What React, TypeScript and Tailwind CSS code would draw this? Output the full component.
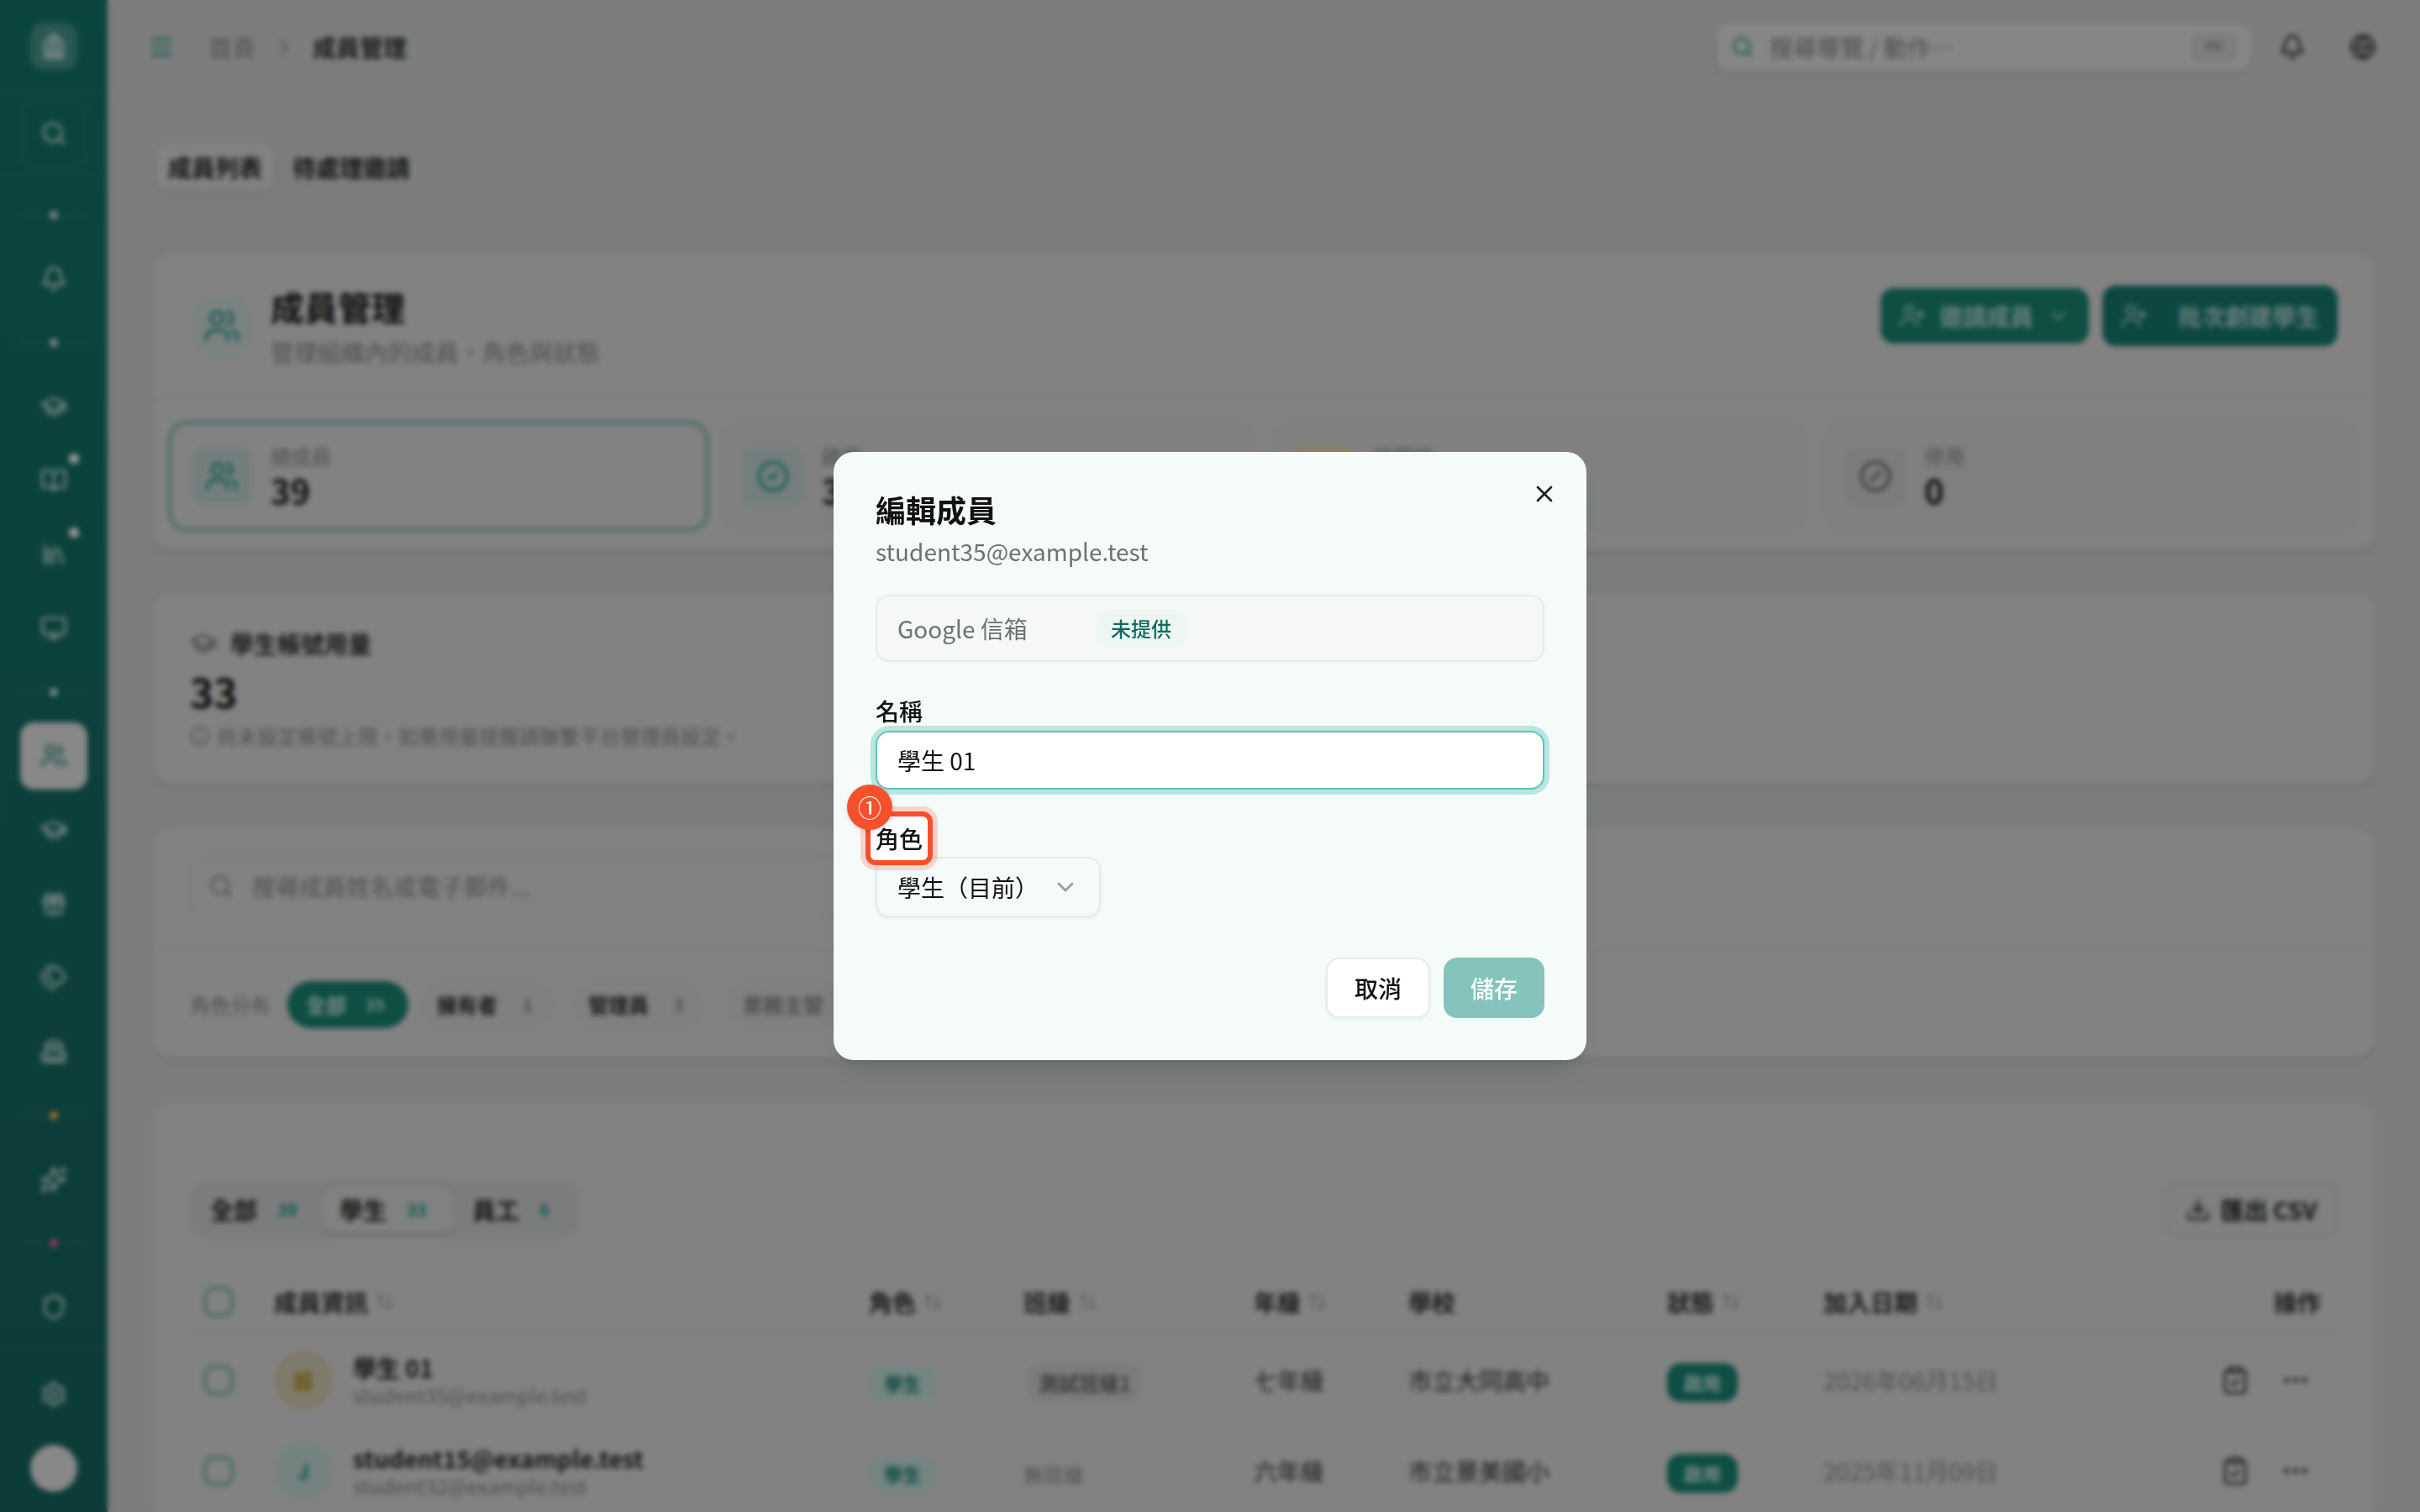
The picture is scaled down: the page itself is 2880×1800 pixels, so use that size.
import {
  ArrowUpDown,
  Backpack,
  Bell,
  BookOpen,
  ChevronDown,
  ChevronRight,
  CircleCheck,
  CircleSlash,
  Clock,
  ClipboardCheck,
  Download,
  Ellipsis,
  Gift,
  Globe,
  GraduationCap,
  Info,
  Library,
  Menu,
  Monitor,
  School,
  Search,
  Settings,
  Shield,
  Sparkles,
  Tags,
  UserPlus,
  Users,
  X,
} from "lucide-react"

const rowGrid = "grid grid-cols-[50px_354px_92px_137px_92px_154px_93px_1fr] items-center"

function SideSep({ dot = "bg-white/70" }: { dot?: string }) {
  return (
    <div className="flex h-7 w-[40px] items-center justify-center gap-1">
      <span className="h-px flex-1 bg-white/10" />
      <span className={`size-[5px] rounded-full ${dot}`} />
      <span className="h-px flex-1 bg-white/10" />
    </div>
  )
}

function SideItem({ children, badge, active }: { children: React.ReactNode; badge?: boolean; active?: boolean }) {
  return (
    <div
      className={`relative flex size-10 items-center justify-center rounded-lg ${
        active ? "bg-[#d0d1d0] text-[#167868] shadow-sm" : "text-white/75"
      }`}
    >
      {children}
      {badge && <span className="absolute top-[4px] right-[5px] size-[6px] rounded-full bg-white/90" />}
    </div>
  )
}

function Sidebar() {
  return (
    <aside className="flex h-full w-16 shrink-0 flex-col items-center bg-gradient-to-b from-[#126a61] to-[#135c57]">
      <div className="flex h-14 w-full items-center justify-center border-b border-white/5">
        <div className="flex size-7 items-center justify-center rounded-lg bg-white/20 text-white/80">
          <Backpack size={16} />
        </div>
      </div>
      <div className="flex h-12 w-full items-center justify-center border-b border-white/5">
        <div className="flex size-10 items-center justify-center rounded-lg border border-white/5 text-white/75">
          <Search size={16} />
        </div>
      </div>
      <nav className="flex flex-1 flex-col items-center gap-1 pt-[10px]">
        <SideSep />
        <SideItem><Bell size={16} /></SideItem>
        <SideSep />
        <SideItem><GraduationCap size={16} /></SideItem>
        <SideItem badge><BookOpen size={16} /></SideItem>
        <SideItem badge><Library size={16} /></SideItem>
        <SideItem><Monitor size={16} /></SideItem>
        <SideSep />
        <SideItem active><Users size={16} /></SideItem>
        <SideItem><GraduationCap size={16} /></SideItem>
        <SideItem><Gift size={16} /></SideItem>
        <SideItem><Tags size={16} /></SideItem>
        <SideItem><School size={16} /></SideItem>
        <SideSep dot="bg-[#f0a93b]" />
        <SideItem><Sparkles size={16} /></SideItem>
        <SideSep dot="bg-[#e0559b]" />
        <SideItem><Shield size={16} /></SideItem>
      </nav>
      <div className="flex w-full flex-col items-center gap-[10px] border-t border-white/5 pt-[7px] pb-3">
        <SideItem><Settings size={16} /></SideItem>
        <div className="size-7 rounded-full bg-[#d0d1d0]" />
      </div>
    </aside>
  )
}

function TopBar() {
  return (
    <header className="flex h-14 shrink-0 items-center border-b border-black/5 pt-[1px] pr-[26px] pl-6">
      <Menu size={16} className="text-[#1a8a7d]" />
      <span className="ml-[20px] text-sm text-[#7a7c7b]">首頁</span>
      <ChevronRight size={14} className="mr-[10px] ml-[10px] text-[#7a7c7b]" />
      <span className="text-sm font-semibold text-[#2b2b2b]">成員管理</span>
      <div className="ml-auto flex h-[29px] w-[319px] items-center rounded-lg border border-black/5 bg-[#cdcfce] px-2 shadow-sm">
        <Search size={14} className="text-[#1a8a7d]" />
        <span className="ml-[9px] text-sm text-[#7a7c7b]">搜尋導覽 / 動作⋯</span>
        <kbd className="ml-auto rounded bg-[#c0c2c1] px-2 py-0.5 text-[9px] text-[#7a7c7b]">⌘K</kbd>
      </div>
      <Bell size={16} className="ml-[16px] text-[#222]" />
      <Globe size={16} className="ml-[26px] text-[#222]" />
    </header>
  )
}

function StatCard({
  icon,
  label,
  value,
  tint,
  active,
}: {
  icon: React.ReactNode
  label: string
  value: string
  tint: string
  active?: boolean
}) {
  return (
    <div
      className={`flex h-[66px] items-center gap-[11px] rounded-xl border-2 px-[12px] ${
        active ? "-mr-[2px] border-[#6fa59c]" : "border-transparent bg-[#c3c5c4]"
      }`}
    >
      <div className={`flex size-9 items-center justify-center rounded-lg ${tint}`}>{icon}</div>
      <div className="flex flex-col">
        <span className="text-xs leading-4 text-[#7a7c7b]">{label}</span>
        <span className="text-xl leading-6 font-semibold text-[#1a1a1a]">{value}</span>
      </div>
    </div>
  )
}

function RolePill({
  label,
  count,
  active,
  muted,
  className = "",
}: {
  label: string
  count: string
  active?: boolean
  muted?: boolean
  className?: string
}) {
  return (
    <div
      className={`flex h-7 items-center rounded-full text-xs font-semibold whitespace-nowrap ${className} ${
        active ? "bg-[#167868] text-white/70" : "bg-[#c3c5c4]"
      } ${muted ? "text-[#7a7c7b]" : active ? "" : "text-[#2b2b2b]"}`}
    >
      <span>{label}</span>
      <span className={`text-[10px] ${active ? "text-white/60" : "text-[#7a7c7b]"}`}>{count}</span>
    </div>
  )
}

function HeaderCell({ label, sort = true }: { label: string; sort?: boolean }) {
  return (
    <div className="flex items-center gap-1 text-sm font-semibold text-[#2b2b2b]">
      {label}
      {sort && <ArrowUpDown size={12} className="text-[#8f9190]" />}
    </div>
  )
}

function MemberRow({
  initial,
  avatar,
  name,
  email,
  classCell,
  grade,
  school,
  date,
}: {
  initial: string
  avatar: string
  name: string
  email: string
  classCell: React.ReactNode
  grade: string
  school: string
  date: string
}) {
  return (
    <div className={`${rowGrid} h-[54px] border-b border-black/5 pr-[10px]`}>
      <div className="pl-2">
        <div className="size-[18px] rounded-[6px] border-2 border-[#6fa59c]" />
      </div>
      <div className="flex items-center gap-[12px]">
        <div className={`flex size-[35px] items-center justify-center rounded-full text-xs font-semibold ${avatar}`}>
          {initial}
        </div>
        <div className="flex flex-col">
          <span className="text-sm leading-[18px] font-semibold text-[#222]">{name}</span>
          <span className="text-xs leading-[15px] text-[#7a7c7b]">{email}</span>
        </div>
      </div>
      <div>
        <span className="inline-flex h-[21px] w-[40px] items-center justify-center rounded-lg bg-[#b3cdc8] text-[11px] font-semibold text-[#167868]">
          學生
        </span>
      </div>
      <div>{classCell}</div>
      <div className="text-sm text-[#2b2b2b]">{grade}</div>
      <div className="text-sm text-[#2b2b2b]">{school}</div>
      <div>
        <span className="inline-flex h-[23px] w-[42px] items-center justify-center rounded-lg bg-[#167868] text-[11px] font-semibold text-white/70">
          啟用
        </span>
      </div>
      <div className="flex items-center justify-between pr-[6px]">
        <span className="text-sm text-[#7a7c7b]">{date}</span>
        <div className="flex items-center gap-[18px] text-[#333]">
          <ClipboardCheck size={18} />
          <Ellipsis size={18} />
        </div>
      </div>
    </div>
  )
}

function Page() {
  return (
    <main className="flex min-w-0 flex-1 flex-col">
      <TopBar />
      <div className="flex flex-col px-[26px] pt-[29px]">
        <div className="flex h-[29px] items-center gap-[5px] pl-[3px]">
          <span className="flex h-[29px] w-[70px] items-center justify-center rounded-lg bg-[#c8c8c8] text-sm font-semibold text-[#222] shadow-sm">
            成員列表
          </span>
          <span className="px-[6px] text-sm font-semibold text-[#222]">待處理邀請</span>
        </div>

        <section className="mt-9 rounded-xl border border-black/5 bg-[#c8c8c8] shadow-sm">
          <div className="flex h-[87px] items-center border-b border-black/5 pr-[22px] pl-[23px]">
            <div className="flex size-9 items-center justify-center rounded-xl bg-[#bdc9c6] text-[#1a8a7d]">
              <Users size={22} />
            </div>
            <div className="ml-[11px] flex flex-col">
              <h1 className="text-xl leading-7 font-bold text-[#151515]">成員管理</h1>
              <p className="mt-[3px] text-sm leading-5 text-[#7a7c7b]">管理組織內的成員、角色與狀態</p>
            </div>
            <div className="mt-[19px] ml-auto flex items-center gap-2 self-start">
              <button className="flex h-[33px] w-[124px] items-center justify-center gap-2 rounded-lg bg-[#167868] text-sm font-semibold text-white/60">
                <UserPlus size={16} />
                邀請成員
                <ChevronDown size={14} />
              </button>
              <button className="flex h-9 w-[140px] items-center justify-center gap-[18px] rounded-lg bg-[#136e66] text-sm font-semibold text-white/60">
                <UserPlus size={16} />
                批次創建學生
              </button>
            </div>
          </div>
          <div className="grid h-[89px] grid-cols-4 items-center gap-2 px-[9px] pt-[2px]">
            <StatCard active label="總成員" value="39" tint="bg-[#b3c4c0]" icon={<Users size={20} className="text-[#1a8a7d]" />} />
            <StatCard label="啟用" value="33" tint="bg-[#b3c4c0]" icon={<CircleCheck size={20} className="text-[#1a8a7d]" />} />
            <StatCard label="待審核" value="6" tint="bg-[#d8c49a]" icon={<Clock size={20} className="text-[#c98a1e]" />} />
            <StatCard label="停用" value="0" tint="bg-[#bdbfbe]" icon={<CircleSlash size={20} className="text-[#555]" />} />
          </div>
        </section>

        <section className="mt-[24px] flex h-[115px] flex-col rounded-xl border border-black/5 bg-[#c8c8c8] px-[22px] pt-[20px] shadow-sm">
          <div className="flex items-center gap-[8px] text-sm font-semibold text-[#2b2b2b]">
            <GraduationCap size={16} className="text-[#666]" />
            學生帳號用量
          </div>
          <div className="mt-[2px] text-2xl leading-8 font-bold text-[#151515]">33</div>
          <div className="mt-[3px] flex items-center gap-[4px] text-xs text-[#7a7c7b]">
            <Info size={12} />
            尚未設定帳號上限，如需用量提醒請聯繫平台管理員設定。
          </div>
        </section>

        <section className="mt-[25px] rounded-xl border border-black/5 bg-[#c8c8c8] shadow-sm">
          <div className="flex h-[73px] items-start border-b border-black/5 px-[22px] pt-[16px]">
            <div className="flex h-[37px] w-[700px] items-center rounded-lg border border-black/5 px-[10px]">
              <Search size={15} className="text-[#7a7c7b]" />
              <input
                readOnly
                placeholder="搜尋成員姓名或電子郵件..."
                className="ml-[11px] flex-1 bg-transparent text-sm placeholder:text-[#7a7c7b]"
              />
            </div>
          </div>
          <div className="flex h-[63px] items-center gap-[9px] px-[22px] pt-[1px]">
            <span className="mr-[1px] text-xs text-[#7a7c7b]">角色分布</span>
            <RolePill active label="全部" count="39" className="w-[72px] gap-[11px] pl-[11px]" />
            <RolePill label="擁有者" count="1" className="-ml-[2px] w-[80px] gap-[15px] pl-[10px]" />
            <RolePill label="管理員" count="3" className="ml-[2px] w-[78px] gap-[15px] pl-[9px]" />
            <RolePill muted label="業務主管" count="1" className="ml-[4px] gap-[11px] px-[10px]" />
          </div>
        </section>

        <section className="mt-[25px] h-[300px] rounded-xl border border-black/5 bg-[#c8c8c8] px-[22px] pt-[46px]">
          <div className="flex items-center justify-between">
            <div className="flex h-[36px] items-center gap-[3px] rounded-xl bg-[#bec0bf] px-[3px] text-sm font-semibold text-[#222]">
              <span className="flex w-[72px] items-center gap-[12px] pl-[9px]">全部 <span className="text-[10px] text-[#1a8a7d]">39</span></span>
              <span className="flex h-[27px] w-[80px] items-center gap-[12px] rounded-lg bg-[#c5c6c5] pl-[11px] shadow-sm">學生 <span className="text-[10px] text-[#1a8a7d]">33</span></span>
              <span className="flex w-[68px] items-center gap-[12px] pl-[7px]">員工 <span className="text-[10px] text-[#1a8a7d]">6</span></span>
            </div>
            <button className="flex h-[34px] w-[103px] items-center justify-center gap-[6px] rounded-lg border border-black/5 bg-[#c3c5c4] text-sm font-semibold text-[#222]">
              <Download size={15} />
              匯出 CSV
            </button>
          </div>
          <div className="mt-[17px] border-t border-dashed border-black/10">
            <div className={`${rowGrid} h-[39px] border-b border-black/5 pr-[10px]`}>
              <div className="pl-2">
                <div className="size-[18px] rounded-[6px] border-2 border-[#6fa59c]" />
              </div>
              <HeaderCell label="成員資訊" />
              <HeaderCell label="角色" />
              <HeaderCell label="班級" />
              <HeaderCell label="年級" />
              <HeaderCell label="學校" sort={false} />
              <HeaderCell label="狀態" />
              <div className="flex items-center justify-between">
                <HeaderCell label="加入日期" />
                <span className="text-sm font-semibold text-[#2b2b2b]">操作</span>
              </div>
            </div>
            <MemberRow
              initial="設"
              avatar="bg-[#c4bda3] text-[#a3821a]"
              name="學生 01"
              email="student35@example.test"
              classCell={
                <span className="ml-[2px] inline-flex h-[23px] items-center rounded-lg bg-[#bcbebd] px-[7px] text-xs text-[#333]">
                  測試班級1
                </span>
              }
              grade="七年級"
              school="市立大同高中"
              date="2026年06月15日"
            />
            <MemberRow
              initial="J"
              avatar="bg-[#b3c9c5] text-[#167868]"
              name="student15@example.test"
              email="student32@example.test"
              classCell={<span className="text-xs text-[#7a7c7b]">無班級</span>}
              grade="六年級"
              school="市立景美國小"
              date="2025年11月09日"
            />
          </div>
        </section>
      </div>
    </main>
  )
}

function EditMemberDialog() {
  return (
    <div className="absolute inset-0 flex items-center justify-center bg-black/35 backdrop-blur-[1.5px]">
      <div className="relative flex w-[448px] flex-col rounded-xl border border-[#f5fbf9] bg-[#f5fbf9] p-6 text-[#111] shadow-lg">
        <button className="absolute top-4 right-4 text-[#222]">
          <X size={16} />
        </button>
        <h2 className="text-lg leading-[18px] font-semibold">編輯成員</h2>
        <p className="mt-[6px] text-sm leading-5 text-[#6b7271]">student35@example.test</p>

        <div className="mt-4 flex h-10 items-center rounded-lg border border-[#e6ebe9] bg-[#f5f8f7] px-3 text-sm">
          <span className="w-[118px] text-[#6b7271]">Google 信箱</span>
          <span className="flex h-[22px] items-center rounded-lg bg-[#eef6f3] px-[9px] text-xs font-medium text-[#0f6b5f]">
            未提供
          </span>
        </div>

        <label className="mt-[19px] text-sm leading-5 font-medium">名稱</label>
        <input
          readOnly
          defaultValue="學生 01"
          className="mt-[2px] h-[35px] w-full rounded-lg border border-[#5fc4b6] bg-white px-3 text-sm shadow-[0_0_0_3px_#b9e6e0] outline-none"
        />

        <div className="relative mt-[19px] h-5 w-fit text-sm leading-5 font-medium">
          <span className="absolute -top-[6px] -right-[6px] -bottom-[6px] -left-[6px] rounded-md border-[3px] border-[#f4512c] bg-white shadow-[0_0_0_3px_rgba(244,81,44,0.22)]" />
          <span className="relative">角色</span>
          <span className="absolute -top-[22px] -left-[17px] flex size-[27px] items-center justify-center rounded-full bg-[#f4512c] text-sm text-white shadow-sm">
            ①
          </span>
        </div>
        <button className="mt-[1px] flex h-9 w-[134px] items-center justify-between rounded-lg border border-[#e6ebe9] bg-[#f5fbf9] px-3 text-sm shadow-xs">
          學生（目前）
          <ChevronDown size={16} className="text-[#111]/40" />
        </button>

        <div className="mt-6 flex justify-end gap-2">
          <button className="flex h-9 w-[62px] items-center justify-center rounded-lg border border-[#e6ebe9] bg-white text-sm font-medium shadow-xs">
            取消
          </button>
          <button className="flex h-9 w-[60px] items-center justify-center rounded-lg bg-[#86c3bd] text-sm font-medium text-white">
            儲存
          </button>
        </div>
      </div>
    </div>
  )
}

export default function App() {
  return (
    <div className="relative flex h-[900px] w-[1440px] overflow-hidden bg-[#bfc2c0] [font-family:'Noto_Sans_CJK_TC','Noto_Sans',sans-serif] [zoom:2]">
      <Sidebar />
      <Page />
      <EditMemberDialog />
    </div>
  )
}
